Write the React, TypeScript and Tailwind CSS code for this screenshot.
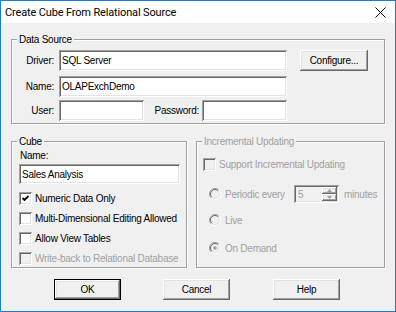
import React from "react";

const sunken =
  "shadow-[inset_1px_1px_0_#a0a0a0,inset_-1px_-1px_0_#ffffff,inset_2px_2px_0_#696969,inset_-2px_-2px_0_#e3e3e3]";
const raised =
  "shadow-[inset_-1px_-1px_0_#696969,inset_1px_1px_0_#ffffff,inset_-2px_-2px_0_#a0a0a0,inset_2px_2px_0_#e3e3e3]";

type GroupProps = {
  title: string;
  disabled?: boolean;
  className: string;
  children: React.ReactNode;
};

const Group: React.FC<GroupProps> = ({ title, disabled, className, children }) => (
  <div
    className={`relative border border-[#a0a0a0] shadow-[inset_1px_1px_0_#ffffff,1px_1px_0_#ffffff] ${className}`}
  >
    <span
      className={`absolute left-[5px] -top-[7px] h-[13px] px-[2px] leading-[13px] bg-[#f0f0f0] ${
        disabled ? "text-[#a0a0a0]" : "text-black"
      }`}
    >
      {title}
    </span>
    {children}
  </div>
);

const TextBox: React.FC<{ className: string; value?: string }> = ({ className, value }) => (
  <div className={`flex items-center bg-white pl-[3px] h-[21px] ${sunken} ${className}`}>
    {value}
  </div>
);

const Button: React.FC<{ label: string; className?: string; isDefault?: boolean }> = ({
  label,
  className = "",
  isDefault,
}) =>
  isDefault ? (
    <div className={`w-[67px] h-[21px] border border-black ${className}`}>
      <div className={`w-full h-full flex items-center justify-center bg-[#f0f0f0] ${raised}`}>
        {label}
      </div>
    </div>
  ) : (
    <div
      className={`w-[67px] h-[21px] flex items-center justify-center bg-[#f0f0f0] ${raised} ${className}`}
    >
      {label}
    </div>
  );

const CheckBox: React.FC<{ checked?: boolean; disabled?: boolean }> = ({ checked, disabled }) => (
  <span
    className={`relative block w-[13px] h-[13px] shrink-0 ${disabled ? "bg-[#f0f0f0]" : "bg-white"} ${sunken}`}
  >
    {checked && (
      <svg className="absolute left-0 top-0" width="13" height="13" viewBox="0 0 13 13">
        <path d="M3.5 6 L5.5 8 L9.5 4" fill="none" stroke="#000" strokeWidth="1.8" />
      </svg>
    )}
  </span>
);

const Radio: React.FC<{ selected?: boolean }> = ({ selected }) => (
  <svg width="12" height="12" viewBox="0 0 12 12" className="shrink-0">
    <circle cx="6" cy="6" r="5.5" fill="#f0f0f0" />
    <path d="M2.1 9.9 A5.5 5.5 0 0 1 9.9 2.1" fill="none" stroke="#a0a0a0" strokeWidth="1" />
    <path d="M9.9 2.1 A5.5 5.5 0 0 1 2.1 9.9" fill="none" stroke="#ffffff" strokeWidth="1" />
    <path d="M2.8 9.2 A4.5 4.5 0 0 1 9.2 2.8" fill="none" stroke="#696969" strokeWidth="1" />
    <path d="M9.2 2.8 A4.5 4.5 0 0 1 2.8 9.2" fill="none" stroke="#e3e3e3" strokeWidth="1" />
    {selected && <circle cx="6" cy="6" r="1.8" fill="#a0a0a0" />}
  </svg>
);

const CheckRow: React.FC<{ label: string; checked?: boolean; disabled?: boolean }> = ({
  label,
  checked,
  disabled,
}) => (
  <div className="flex items-center h-[20px] gap-[3px] whitespace-nowrap">
    <CheckBox checked={checked} disabled={disabled} />
    <span className={disabled ? "text-[#a0a0a0]" : "text-black"}>{label}</span>
  </div>
);

const App: React.FC = () => {
  return (
    <div className="w-[396px] h-[312px] flex flex-col border border-[#1a7fd4] bg-[#f0f0f0] text-[10px] leading-[13px] tracking-[-0.25px] whitespace-nowrap text-black font-['Liberation_Sans',Arial,sans-serif]">
      {/* title bar */}
      <div className="h-[22px] shrink-0 bg-white flex items-center pl-[4px] pr-[9px]">
        <span className="text-[11px] tracking-[-0.15px] font-['Roboto',sans-serif]">
          Create Cube From Relational Source
        </span>
        <svg className="ml-auto" width="11" height="11" viewBox="0 0 11 11">
          <path d="M0.5 0.5 L10.5 10.5 M10.5 0.5 L0.5 10.5" stroke="#000" strokeWidth="1" />
        </svg>
      </div>

      <div className="flex flex-col pl-[10px] pt-[16px]">
        <Group title="Data Source" className="w-[374px] h-[85px] pt-[10px]">
          <div className="flex items-center h-[21px]">
            <span className="w-[42px] text-right">Driver:</span>
            <TextBox className="ml-[5px] w-[228px]" value="SQL Server" />
            <Button label="Configure..." className="ml-[13px] w-[68px]" />
          </div>
          <div className="flex items-center h-[21px] mt-[5px]">
            <span className="w-[42px] text-right">Name:</span>
            <TextBox className="ml-[5px] w-[228px]" value="OLAPExchDemo" />
          </div>
          <div className="flex items-center h-[21px] mt-[3px]">
            <span className="w-[42px] text-right">User:</span>
            <TextBox className="ml-[5px] w-[85px]" />
            <span className="w-[58px] text-right pr-[3px]">Password:</span>
            <TextBox className="w-[85px]" />
          </div>
        </Group>

        <div className="flex mt-[17px] gap-[9px]">
          <Group title="Cube" className="w-[176px] h-[127px] pt-[7px] pl-[7px]">
            <div className="pl-[1px] h-[13px]">Name:</div>
            <TextBox className="mt-[2px] w-[161px] !h-[20px]" value="Sales Analysis" />
            <div className="mt-[4px] flex flex-col">
              <CheckRow label="Numeric Data Only" checked />
              <CheckRow label="Multi-Dimensional Editing Allowed" />
              <CheckRow label="Allow View Tables" />
              <CheckRow label="Write-back to Relational Database" disabled />
            </div>
          </Group>

          <Group
            title="Incremental Updating"
            disabled
            className="w-[189px] h-[127px] pt-[12px] pl-[6px] text-[#a0a0a0]"
          >
            <CheckRow label="Support Incremental Updating" disabled />
            <div className="flex items-center h-[20px] mt-[10px] pl-[6px]">
              <Radio />
              <span className="ml-[4px] w-[69px]">Periodic every</span>
              <div className={`relative w-[45px] h-[18px] flex items-center pl-[4px] bg-[#f0f0f0] ${sunken}`}>
                5
                <div className="absolute right-[2px] top-[2px] w-[15px] h-[14px] flex flex-col">
                  <div className={`h-[7px] flex items-center justify-center ${raised}`}>
                    <svg width="5" height="3" viewBox="0 0 5 3">
                      <path d="M2.5 0 L5 3 L0 3 Z" fill="#a0a0a0" />
                    </svg>
                  </div>
                  <div className={`h-[7px] flex items-center justify-center ${raised}`}>
                    <svg width="5" height="3" viewBox="0 0 5 3">
                      <path d="M0 0 L5 0 L2.5 3 Z" fill="#a0a0a0" />
                    </svg>
                  </div>
                </div>
              </div>
              <span className="ml-[5px]">minutes</span>
            </div>
            <div className="flex items-center h-[20px] mt-[6px] pl-[6px]">
              <Radio />
              <span className="ml-[4px]">Live</span>
            </div>
            <div className="flex items-center h-[20px] mt-[8px] pl-[6px]">
              <Radio selected />
              <span className="ml-[4px]">On Demand</span>
            </div>
          </Group>
        </div>
      </div>

      <div className="flex mt-[11px] pl-[53px]">
        <Button label="OK" isDefault />
        <Button label="Cancel" className="ml-[42px]" />
        <Button label="Help" className="ml-[43px]" />
      </div>
    </div>
  );
};

export default App;
